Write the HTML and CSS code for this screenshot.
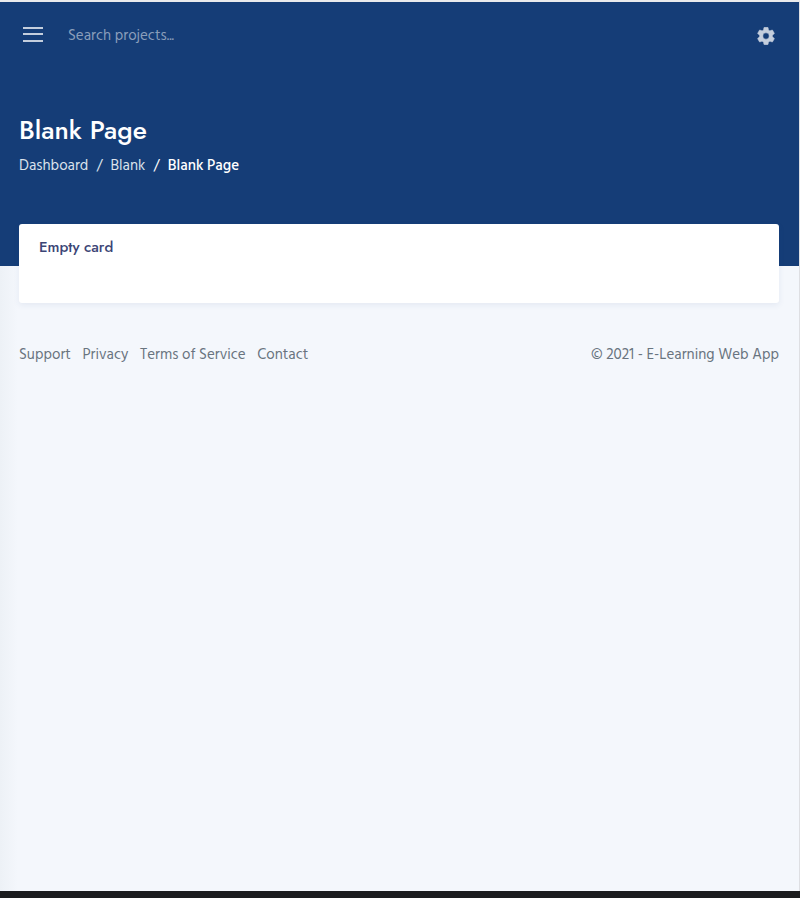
FILE: index.html
```
<!DOCTYPE html>
<html lang="en">
<head>
<meta charset="utf-8">
<title>Blank Page</title>
<link rel="stylesheet" href="styles.css">
</head>
<body>
<div class="app">
  <header class="hero">
    <nav class="navbar">
      <button class="menu" aria-label="Menu"><span></span><span></span><span></span></button>
      <div class="search">Search projects...</div>
      <button class="settings" aria-label="Settings">
        <svg viewBox="2 2 20 20" width="18" height="18"><path d="M19.14 12.94c.04-.3.06-.61.06-.94 0-.32-.02-.64-.07-.94l2.03-1.58c.18-.14.23-.41.12-.61l-1.92-3.32c-.12-.22-.37-.29-.59-.22l-2.39.96c-.5-.38-1.03-.7-1.62-.94l-.36-2.54c-.04-.24-.24-.41-.48-.41h-3.84c-.24 0-.43.17-.47.41l-.36 2.54c-.59.24-1.13.57-1.62.94l-2.39-.96c-.22-.08-.47 0-.59.22L2.74 8.87c-.12.21-.08.47.12.61l2.03 1.58c-.05.3-.09.63-.09.94s.02.64.07.94l-2.03 1.58c-.18.14-.23.41-.12.61l1.92 3.32c.12.22.37.29.59.22l2.39-.96c.5.38 1.03.7 1.62.94l.36 2.54c.05.24.24.41.48.41h3.84c.24 0 .44-.17.47-.41l.36-2.54c.59-.24 1.13-.56 1.62-.94l2.39.96c.22.08.47 0 .59-.22l1.92-3.32c.12-.22.07-.47-.12-.61l-2.01-1.58zM12 15.5A3.5 3.5 0 1 1 12 8.5a3.5 3.5 0 0 1 0 7z"/></svg>
      </button>
    </nav>
    <h1>Blank Page</h1>
    <div class="breadcrumb">
      <span>Dashboard</span><i>/</i><span>Blank</span><i class="last">/</i><b>Blank Page</b>
    </div>
  </header>
  <main class="card"><h2>Empty card</h2></main>
  <footer>
    <div class="links"><span>Support</span><span>Privacy</span><span>Terms of Service</span><span>Contact</span></div>
    <div>© 2021 - E-Learning Web App</div>
  </footer>
</div>
<div class="bottom"></div>
</body>
</html>
```
FILE: styles.css
```
* { box-sizing: border-box; }
body { margin: 0; background: #f4f7fc; font: 15px/22px "Hind", "Noto Sans", sans-serif; }
.app {
  height: 891px; border-top: 2px solid #e9eaec; border-right: 1px solid #dedfe3;
  background: linear-gradient(90deg, #edf1f6, #f4f7fc 18px);
}
.hero { height: 264px; padding: 0 20px 0 19px; background: #153d77; color: #fff; }
.navbar { display: flex; align-items: center; height: 65px; padding-left: 4px; }
button { border: 0; padding: 0; background: none; }
.menu { width: 20px; height: 15px; display: grid; grid-template-rows: 2px 2px 2px; row-gap: 4px; }
.menu span { background: #c4cedd; }
.menu span:last-child { margin-top: 1px; height: 2px; }
.search { flex: 1; padding: 2px 0 0 25px; color: #8a9ebb; }
.settings { width: 18px; height: 18px; margin: 3px 4px 0 0; }
.settings svg { display: block; fill: #c4cedd; stroke: #c4cedd; stroke-width: .5; }
h1 { margin: 48px 0 0; font: 500 26.25px/30px "Jost", "Lato", sans-serif; }
.breadcrumb { display: flex; margin-top: 10px; color: #dbe2eb; }
.breadcrumb i { font-style: normal; width: 22.2px; text-align: center; }
.breadcrumb .last { color: #fff; width: 22.5px; }
.breadcrumb b { color: #fff; font-weight: 500; }
.card {
  height: 79px; margin: -42px 20px 0 19px; padding: 12px 20px; background: #fff;
  border-radius: 3px; box-shadow: 0 2px 6px rgba(40, 70, 130, .08);
}
h2 { margin: 0; color: #3b4576; font: 500 15px/22px "Jost", "Lato", sans-serif; }
footer { display: flex; justify-content: space-between; margin: 41px 20px 0 19px; color: #69747f; }
.links { display: flex; gap: 11.6px; }
.bottom { height: 7px; background: #1b1c1e; }
```
